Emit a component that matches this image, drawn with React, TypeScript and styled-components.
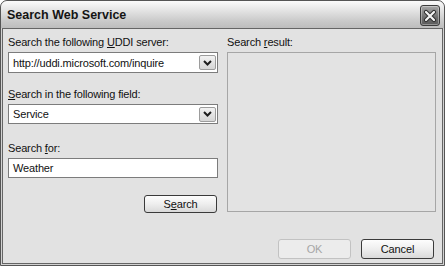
import React from 'react';
import styled, { createGlobalStyle } from 'styled-components';

const GlobalStyle = createGlobalStyle`
  html, body {
    margin: 0;
    padding: 0;
    background: #ffffff;
  }
  body {
    font-family: "Liberation Sans", Arial, sans-serif;
  }
  * {
    box-sizing: border-box;
  }
`;

const Window = styled.div`
  width: 445px;
  height: 266px;
  display: flex;
  flex-direction: column;
  border: 1px solid #555555;
  border-radius: 7px 7px 0 0;
  background: #d2d2d2;
  padding: 0 1px 1px 1px;
  overflow: hidden;
`;

const TitleBar = styled.div`
  height: 27px;
  margin: 0 -1px;
  padding: 0 4px 0 6px;
  display: flex;
  align-items: center;
  justify-content: space-between;
  border-radius: 6px 6px 0 0;
  background: linear-gradient(#fbfbfb 0%, #e4e4e4 35%, #c9c9c9 75%, #bdbdbd 100%);
`;

const Title = styled.span`
  font-size: 12.5px;
  font-weight: bold;
  color: #141414;
  padding-top: 1px;
`;

const CloseButton = styled.div`
  width: 20px;
  height: 21px;
  margin-top: 2px;
  display: flex;
  align-items: center;
  justify-content: center;
  border: 1px solid #3c3c3c;
  border-radius: 3px;
  background: linear-gradient(#a8a8a8, #6e6e6e 60%, #5c5c5c);
  box-shadow: inset 0 0 0 1px rgba(255, 255, 255, 0.35);
`;

const Client = styled.div`
  flex: 1;
  border: 1px solid #656565;
  background: #e2e2e2;
  padding: 7px 5px 0 5px;
  display: grid;
  grid-template-columns: 210px 209px;
  grid-template-rows: auto auto;
  column-gap: 9px;
  font-size: 11px;
  letter-spacing: -0.15px;
  color: #111111;
`;

const Column = styled.div`
  display: flex;
  flex-direction: column;
`;

const Field = styled.div<{ $top?: number }>`
  display: flex;
  flex-direction: column;
  margin-top: ${(p) => p.$top ?? 0}px;
`;

const Label = styled.label`
  line-height: 13px;
  height: 13px;
  margin-bottom: 3px;
  white-space: nowrap;
`;

const SelectBox = styled.div<{ $h: number }>`
  height: ${(p) => p.$h}px;
  display: flex;
  align-items: center;
  justify-content: space-between;
  background: #ffffff;
  border: 1px solid #7c7c7c;
  padding: 0 1px 0 4px;
`;

const InputBox = styled.div`
  height: 20px;
  display: flex;
  align-items: center;
  background: #ffffff;
  border: 1px solid #7c7c7c;
  padding: 0 4px;
`;

const DropButton = styled.div`
  width: 17px;
  height: 15px;
  display: flex;
  align-items: center;
  justify-content: center;
  border: 1px solid #9c9c9c;
  border-radius: 2px;
  background: linear-gradient(#f2f2f2, #d6d6d6);
`;

const Button = styled.div<{ $disabled?: boolean; $h?: number }>`
  width: 73px;
  height: ${(p) => p.$h ?? 20}px;
  display: flex;
  align-items: center;
  justify-content: center;
  border: 1px solid ${(p) => (p.$disabled ? '#c2c2c2' : '#3a3a3a')};
  border-radius: 3px;
  color: ${(p) => (p.$disabled ? '#a6a6a6' : '#111111')};
  background: ${(p) =>
    p.$disabled ? '#ececec' : 'linear-gradient(#fdfdfd, #eeeeee 50%, #d9d9d9)'};
`;

const SearchButton = styled(Button)`
  align-self: flex-end;
  margin-top: 17px;
  margin-right: 1px;
`;

const ResultBox = styled.div`
  height: 160px;
  border: 1px solid #a6a6a6;
  background: #e3e3e3;
`;

const Footer = styled.div`
  grid-column: 1 / span 2;
  display: flex;
  justify-content: flex-end;
  gap: 10px;
  margin-top: 21px;
  padding-right: 2px;
`;

const Chevron = () => (
  <svg width="9" height="6" viewBox="0 0 9 6">
    <path d="M1 1 L4.5 4.5 L8 1" fill="none" stroke="#1e1e1e" strokeWidth="2" />
  </svg>
);

const CloseIcon = () => (
  <svg width="14" height="14" viewBox="0 0 14 14">
    <path d="M3 3 L11 11 M11 3 L3 11" stroke="#2e2e2e" strokeWidth="4.2" strokeLinecap="round" />
    <path d="M3 3 L11 11 M11 3 L3 11" stroke="#f4f4f4" strokeWidth="2.2" strokeLinecap="round" />
  </svg>
);

export default function App() {
  return (
    <>
      <GlobalStyle />
      <Window>
        <TitleBar>
          <Title>Search Web Service</Title>
          <CloseButton>
            <CloseIcon />
          </CloseButton>
        </TitleBar>
        <Client>
          <Column>
            <Field>
              <Label>
                Search the following <u>U</u>DDI server:
              </Label>
              <SelectBox $h={21}>
                <span>http://uddi.microsoft.com/inquire</span>
                <DropButton>
                  <Chevron />
                </DropButton>
              </SelectBox>
            </Field>
            <Field $top={15}>
              <Label>
                <u>S</u>earch in the following field:
              </Label>
              <SelectBox $h={20}>
                <span>Service</span>
                <DropButton>
                  <Chevron />
                </DropButton>
              </SelectBox>
            </Field>
            <Field $top={18}>
              <Label>
                Search <u>f</u>or:
              </Label>
              <InputBox>Weather</InputBox>
            </Field>
            <SearchButton $h={18}>
              <span>
                S<u>e</u>arch
              </span>
            </SearchButton>
          </Column>
          <Column>
            <Label>
              Search <u>r</u>esult:
            </Label>
            <ResultBox />
          </Column>
          <Footer>
            <Button $disabled>OK</Button>
            <Button>Cancel</Button>
          </Footer>
        </Client>
      </Window>
    </>
  );
}
